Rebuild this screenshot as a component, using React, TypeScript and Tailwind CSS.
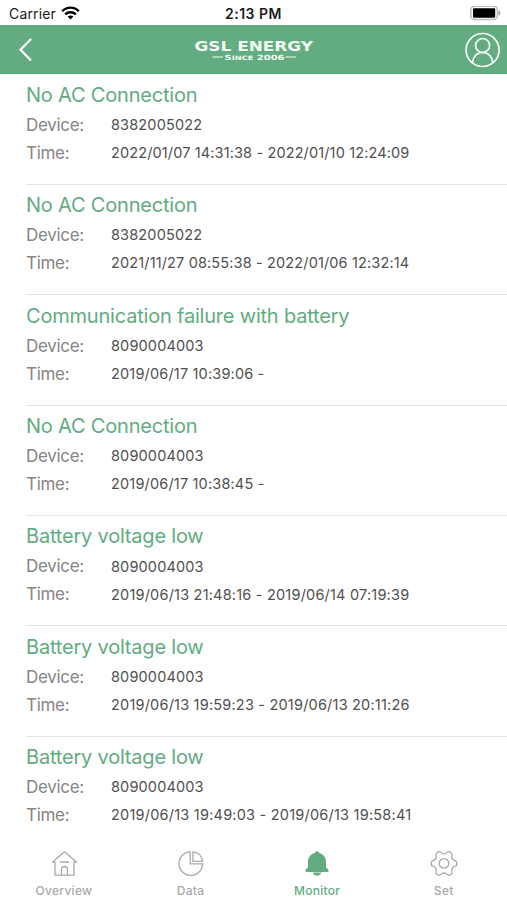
import type { ReactNode } from "react";

type Alarm = { title: string; device: string; time: string; timeSpacing: string };

const alarms: Alarm[] = [
  { title: "No AC Connection", device: "8382005022", time: "2022/01/07 14:31:38 - 2022/01/10 12:24:09", timeSpacing: "tracking-[0.13px]" },
  { title: "No AC Connection", device: "8382005022", time: "2021/11/27 08:55:38 - 2022/01/06 12:32:14", timeSpacing: "tracking-[0.14px]" },
  { title: "Communication failure with battery", device: "8090004003", time: "2019/06/17 10:39:06 -", timeSpacing: "tracking-[0.17px]" },
  { title: "No AC Connection", device: "8090004003", time: "2019/06/17 10:38:45 -", timeSpacing: "tracking-[0.17px]" },
  { title: "Battery voltage low", device: "8090004003", time: "2019/06/13 21:48:16 - 2019/06/14 07:19:39", timeSpacing: "tracking-[0.2px]" },
  { title: "Battery voltage low", device: "8090004003", time: "2019/06/13 19:59:23 - 2019/06/13 20:11:26", timeSpacing: "tracking-[0.2px]" },
  { title: "Battery voltage low", device: "8090004003", time: "2019/06/13 19:49:03 - 2019/06/13 19:58:41", timeSpacing: "tracking-[0.22px]" },
];

function StatusBar() {
  return (
    <div className="grid h-[25px] grid-cols-3 items-center bg-white pt-[2px] text-[#1c1c1c]">
      <div className="flex items-center gap-[5px] pl-[9px]">
        <span className="text-[14px] leading-5 tracking-[0.15px]">Carrier</span>
        <svg width="19" height="15" viewBox="0 0 19 15" fill="none" stroke="#000" strokeWidth="2.3">
          <path d="M1.2 5.2C5.8 .5 13.2 .5 17.8 5.2" />
          <path d="M4.2 8.4C7.2 5.5 11.8 5.5 14.8 8.4" />
          <path d="M6.6 10.6C8.2 9.1 10.8 9.1 12.4 10.6L9.5 13.5Z" fill="#000" stroke="none" />
        </svg>
      </div>
      <span className="text-center text-[14px] leading-5 font-semibold tracking-[0.5px]">2:13 PM</span>
      <div className="flex justify-end pr-[6px]">
        <svg width="31" height="15" viewBox="0 0 31 15">
          <rect x=".8" y=".3" width="26.6" height="13.2" rx="3.8" fill="#fff" stroke="#bdbdbd" strokeWidth="1.6" />
          <rect x="3" y="2.2" width="22.2" height="9.5" rx="1.2" fill="#000" />
          <path d="M28.5 4.2c2.6.8 2.6 4.6 0 5.4Z" fill="#a5a5a5" />
        </svg>
      </div>
    </div>
  );
}

function Header() {
  return (
    <header className="flex h-[49px] items-center bg-[#63ac81] pr-[6px] pl-[18px]">
      <svg width="36" height="26" viewBox="0 0 36 26" fill="none" stroke="#fff" strokeWidth="2.3">
        <path d="M13 2L2.5 12.7L13 23.5" />
      </svg>
      <svg className="ml-[139px]" width="122" height="26" viewBox="0 0 122 26" fill="#f1fff5" fontFamily="DejaVu Sans, sans-serif" fontWeight="700">
        <text x="1.5" y="13.7" fontSize="14.5" textLength="118.5" lengthAdjust="spacingAndGlyphs">GSL ENERGY</text>
        <text x="31.5" y="22.6" fontSize="7.2" textLength="60" lengthAdjust="spacingAndGlyphs">S<tspan fontSize="6">INCE</tspan> 2006</text>
        <path d="M19.5 20H30M92.5 20H103" stroke="#f1fff5" strokeWidth="1" />
      </svg>
      <svg className="ml-auto" width="36" height="36" viewBox="0 0 36 36" fill="none" stroke="#f4fff7" strokeWidth="1.7">
        <circle cx="17.6" cy="18" r="16.5" />
        <circle cx="17.6" cy="13.5" r="7" />
        <path d="M7.4 30.8C7.8 24.5 12 20.5 17.6 20.5S27.4 24.5 27.8 30.8" />
      </svg>
    </header>
  );
}

function AlarmRow({ alarm }: { alarm: Alarm }) {
  return (
    <section className="ml-[26px] h-[110.4px] shrink-0 border-b border-[#e4e4e4] pt-[6.4px] whitespace-nowrap last:border-b-0">
      <h2 className="text-[20px] leading-[28px] tracking-[-0.2px] text-[#63ac81]">{alarm.title}</h2>
      <div className="mt-[2.9px] flex h-[28px] items-center">
        <span className="w-[85px] text-[17px] tracking-[-0.3px] text-[#858585]">Device:</span>
        <span className="pb-[1.4px] text-[14.5px] tracking-[0.15px] text-[#505050]">{alarm.device}</span>
      </div>
      <div className="flex h-[28px] items-center">
        <span className="w-[85px] text-[17px] tracking-[-0.3px] text-[#858585]">Time:</span>
        <span className={`pb-[1.4px] text-[14.5px] text-[#505050] ${alarm.timeSpacing}`}>{alarm.time}</span>
      </div>
    </section>
  );
}

function Tab({ label, active, children }: { label: string; active?: boolean; children: ReactNode }) {
  return (
    <div className={`flex flex-1 flex-col items-center ${active ? "text-[#63ac81]" : "text-[#a9a9a9]"}`}>
      <svg width="30" height="30" viewBox="0 0 30 30" fill="none" stroke="currentColor" strokeWidth="1.3">
        {children}
      </svg>
      <span className="mt-[5px] text-[12px] leading-[16px] font-medium tracking-[0.3px]">{label}</span>
    </div>
  );
}

export default function App() {
  return (
    <main className="flex h-[900px] w-[507px] flex-col overflow-hidden bg-white font-['Inter','Liberation_Sans',sans-serif]">
      <StatusBar />
      <Header />
      <div className="flex min-h-0 flex-1 flex-col overflow-hidden pt-[0.4px]">
        {alarms.map((alarm, i) => (
          <AlarmRow key={i} alarm={alarm} />
        ))}
      </div>
      <nav className="flex h-[52px] shrink-0 bg-white pl-[0.6px]">
        <Tab label="Overview">
          <path d="M6 14.2H3.3L15.5 3.8l12.2 10.4H25v13H6Z" strokeLinejoin="round" />
          <path d="M11 14h9M12.5 27.2v-5.7a3 3 0 0 1 6 0v5.7" />
        </Tab>
        <Tab label="Data">
          <path d="M14.2 3.8A11.8 11.8 0 1 0 26.6 15.9H14.2Z" />
          <path d="M16.9 3.8v9.5h9.7a10 10 0 0 0-9.7-9.5Z" />
        </Tab>
        <Tab label="Monitor" active>
          <path
            d="M15 3.2c1.5 0 2 .9 2.1 1.7 4.4 1 6.9 4.5 6.9 8.9v5.3c0 1.4 2.6 1.7 2.6 3.5 0 1-.7 1.5-1.6 1.5H5c-.9 0-1.6-.5-1.6-1.5 0-1.8 2.6-2.1 2.6-3.5v-5.3c0-4.4 2.5-7.9 6.9-8.9.1-.8.6-1.7 2.1-1.7ZM10.6 24.6h8.8c-1 4.1-7.8 4.1-8.8 0Z"
            fill="currentColor"
            stroke="none"
          />
        </Tab>
        <Tab label="Set">
          <path
            d="M9.2 3.9c1-.6 2-.3 2.7.5 1.8 1.9 4.4 1.9 6.2 0 .7-.8 1.7-1.1 2.7-.5l1.3.8c.9.5 1.1 1.4.8 2.4-.7 2.8.6 4.9 3.2 5.5 1.1.3 1.7 1 1.7 2v1.6c0 1-.6 1.7-1.7 2-2.6.6-3.9 2.7-3.2 5.5.3 1 .1 1.9-.8 2.4l-1.3.8c-1 .6-2 .3-2.7-.5-1.8-1.9-4.4-1.9-6.2 0-.7.8-1.7 1.1-2.7.5l-1.3-.8c-.9-.5-1.1-1.4-.8-2.4.7-2.8-.6-4.9-3.2-5.5-1.1-.3-1.7-1-1.7-2v-1.6c0-1 .6-1.7 1.7-2 2.6-.6 3.9-2.7 3.2-5.5-.3-1-.1-1.9.8-2.4Z"
          />
          <circle cx="15" cy="15.4" r="4.8" />
        </Tab>
      </nav>
    </main>
  );
}
